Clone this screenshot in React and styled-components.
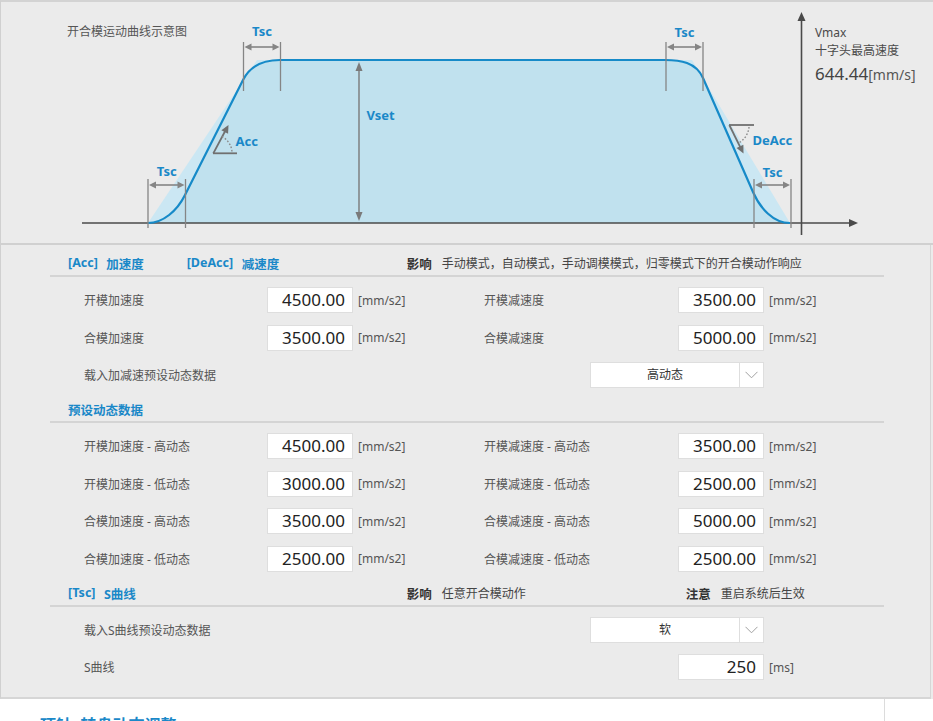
import React from "react";
import styled, { createGlobalStyle } from "styled-components";

const FONT = `"Noto Sans", "Noto Sans CJK SC", sans-serif`;
const BLUE = "#1a88c8";

const GlobalStyle = createGlobalStyle`
  html, body {
    margin: 0;
    padding: 0;
    overflow: hidden;
    background: #fff;
  }
  body {
    font-family: ${FONT};
  }
`;

const Page = styled.div`
  width: 933px;
  height: 721px;
  overflow: hidden;
  background: #ebebeb;
  display: flex;
  flex-direction: column;
`;

// ---------- chart ----------

const ChartPanel = styled.div`
  position: relative;
  flex-shrink: 0;
  height: 241px;
  border-top: 2px solid #d3d3d3;
  border-left: 1px solid #d0d0d0;
  border-bottom: 2px solid #d0d0d0;
  svg {
    display: block;
  }
`;

const ChartTitle = styled.div`
  position: absolute;
  left: 66px;
  top: 22px;
  font-size: 12px;
  line-height: 16px;
  color: #555;
`;

const VmaxBlock = styled.div`
  position: absolute;
  left: 814px;
  top: 22px;
  color: #4a4a4a;
  font-size: 12px;
  line-height: 18px;
  .num {
    line-height: 27px;
    font-size: 17px;
    color: #444;
  }
  .unit {
    font-size: 14px;
    color: #555;
  }
`;

const ChartLabel = styled.text`
  font-family: ${FONT};
  font-weight: 700;
  font-size: 13px;
  fill: ${BLUE};
`;

function head(tx, ty, dx, dy, len = 7, half = 3.5) {
  const n = Math.hypot(dx, dy);
  const ux = dx / n;
  const uy = dy / n;
  const bx = tx - ux * len;
  const by = ty - uy * len;
  return `${tx},${ty} ${bx - uy * half},${by + ux * half} ${bx + uy * half},${by - ux * half}`;
}

const GREY = "#858585";

function TscMark({ x1, x2, top, bottom, y, labelY }) {
  return (
    <g>
      <line x1={x1} x2={x1} y1={top} y2={bottom} stroke={GREY} strokeWidth="1.3" />
      <line x1={x2} x2={x2} y1={top} y2={bottom} stroke={GREY} strokeWidth="1.3" />
      <line x1={x1 + 5} x2={x2 - 5} y1={y} y2={y} stroke={GREY} strokeWidth="1.6" />
      <polygon points={head(x1 + 1, y, -1, 0)} fill={GREY} />
      <polygon points={head(x2 - 1, y, 1, 0)} fill={GREY} />
      <ChartLabel x={(x1 + x2) / 2} y={labelY} textAnchor="middle" dominantBaseline="central">
        Tsc
      </ChartLabel>
    </g>
  );
}

const CURVE =
  "M148,223 C163,223 177,211 185,195 L243,80 C251,64 265,60 280,60 L665,60 C680,60 696,62 703,78 L753,192 C760,208 773,223 790,223";

function MotionChart() {
  return (
    <svg width="932" height="241" viewBox="1 2 932 241">
      <polygon points="148,223 257,60 692,60 790,223" fill="#cbe7f3" />
      <path d={CURVE + " Z"} fill="#c0e1ee" />

      {/* axes */}
      <line x1="82" x2="851" y1="223" y2="223" stroke="#4a4a4a" strokeWidth="1.6" />
      <polygon points={head(858, 223, 1, 0, 9, 4)} fill="#4a4a4a" />
      <line x1="801.5" x2="801.5" y1="235" y2="20" stroke="#4a4a4a" strokeWidth="1.6" />
      <polygon points={head(801.5, 12, 0, -1, 9, 4)} fill="#4a4a4a" />

      <path d={CURVE} fill="none" stroke="#168ac8" strokeWidth="2.2" />

      <TscMark x1={148} x2={185.5} top={179} bottom={228} y={185} labelY={171} />
      <TscMark x1={243.5} x2={280.5} top={42} bottom={91} y={47} labelY={31} />
      <TscMark x1={666} x2={703} top={42} bottom={91} y={47} labelY={32} />
      <TscMark x1={754} x2={791} top={179} bottom={228} y={185} labelY={172} />

      {/* Vset */}
      <line x1="359" x2="359" y1="68" y2="215" stroke="#7a7a7a" strokeWidth="1.4" />
      <polygon points={head(359, 62, 0, -1, 9, 3.5)} fill="#7a7a7a" />
      <polygon points={head(359, 221, 0, 1, 9, 3.5)} fill="#7a7a7a" />
      <ChartLabel x="366.5" y="114.5" dominantBaseline="central">Vset</ChartLabel>

      {/* Acc */}
      <line x1="213" x2="237" y1="153.3" y2="153.3" stroke="#707070" strokeWidth="1.8" />
      <line x1="213.3" y1="153.3" x2="226" y2="129.5" stroke="#707070" strokeWidth="1.8" />
      <polygon points={head(228.5, 125, 15, -28, 8, 3.8)} fill="#707070" />
      <path d="M222,136.5 A19,19 0 0 1 232,152" fill="none" stroke="#8a8a8a" strokeWidth="1.4" strokeDasharray="1.6 1.8" />
      <ChartLabel x="235.5" y="140.5" dominantBaseline="central">Acc</ChartLabel>

      {/* DeAcc */}
      <line x1="729" x2="754" y1="125" y2="125" stroke="#707070" strokeWidth="1.8" />
      <line x1="729.3" y1="125" x2="741" y2="148.6" stroke="#707070" strokeWidth="1.8" />
      <polygon points={head(743.5, 153.5, 14, 28.3, 8, 3.8)} fill="#707070" />
      <path d="M749,127 A20,20 0 0 1 738.5,143" fill="none" stroke="#8a8a8a" strokeWidth="1.4" strokeDasharray="1.6 1.8" />
      <ChartLabel x="752.5" y="140" dominantBaseline="central">DeAcc</ChartLabel>
    </svg>
  );
}

// ---------- settings ----------

const SettingsPanel = styled.div`
  flex-shrink: 0;
  box-sizing: border-box;
  width: 931px;
  padding: 7px 0 7px 49px;
  border-left: 1px solid #d0d0d0;
  border-right: 1px solid #d6d6d6;
  border-bottom: 2px solid #d6d6d6;
`;

const Section = styled.section`
  width: 834px;
`;

const SectionHeader = styled.div`
  display: flex;
  align-items: center;
  height: 23px;
  padding-left: 18px;
  border-bottom: 2px solid #d4d4d4;
  font-size: 12.5px;
  white-space: nowrap;
`;

const HeaderTitle = styled.div`
  display: flex;
  width: 338.7px;
  flex-shrink: 0;
`;

const TitleGroup = styled.div`
  display: flex;
  gap: 8.5px;
  width: ${(p) => (p.$width ? `${p.$width}px` : "auto")};
  color: ${BLUE};
  font-weight: 700;
`;

const Info = styled.div`
  display: flex;
  gap: 10px;
  width: ${(p) => (p.$width ? `${p.$width}px` : "auto")};
  color: #444;
  font-size: 12px;
  b {
    color: #333;
    font-weight: 700;
    font-size: 12.5px;
  }
`;

const Rows = styled.div`
  display: flex;
  flex-direction: column;
  gap: 11.5px;
  padding: 10px 0 10px 34px;
`;

const Row = styled.div`
  display: grid;
  grid-template-columns: 183px 86px 131px 194px 86px 1fr;
  align-items: center;
  height: 26px;
`;

const Label = styled.div`
  grid-column: ${(p) => p.$col || "auto"};
  font-size: 12px;
  color: #555;
  white-space: nowrap;
`;

const ValueBox = styled.div`
  grid-column: ${(p) => p.$col || "auto"};
  box-sizing: border-box;
  height: 26px;
  padding-right: 7px;
  background: #fff;
  border: 1px solid #dedede;
  text-align: right;
  font-size: 17px;
  line-height: 24px;
  color: #222;
`;

const Unit = styled.div`
  margin-left: 5px;
  font-size: 12px;
  color: #555;
  white-space: nowrap;
`;

const Select = styled.div`
  grid-column: 4 / 6;
  justify-self: end;
  box-sizing: border-box;
  display: flex;
  width: 174px;
  height: 26px;
  background: #fff;
  border: 1px solid #dedede;
`;

const SelectText = styled.div`
  flex: 1;
  text-align: center;
  font-size: 12px;
  line-height: 24px;
  color: #333;
`;

const SelectButton = styled.div`
  width: 23px;
  border-left: 1px solid #dedede;
  display: flex;
  align-items: center;
  justify-content: center;
`;

const Chevron = () => (
  <svg width="13" height="8" viewBox="0 0 13 8">
    <polyline points="0.5,0.8 6.5,6.8 12.5,0.8" fill="none" stroke="#a0a0a0" strokeWidth="1" />
  </svg>
);

function Field({ label, value, unit, col }) {
  const start = col === 2 ? 4 : 1;
  return (
    <>
      <Label $col={start}>{label}</Label>
      <ValueBox $col={start + 1}>{value}</ValueBox>
      <Unit>{unit}</Unit>
    </>
  );
}

function DropRow({ label, value }) {
  return (
    <Row>
      <Label $col="1 / 4">{label}</Label>
      <Select>
        <SelectText>{value}</SelectText>
        <SelectButton>
          <Chevron />
        </SelectButton>
      </Select>
    </Row>
  );
}

const accRows = [
  ["开模加速度", "4500.00", "开模减速度", "3500.00"],
  ["合模加速度", "3500.00", "合模减速度", "5000.00"],
];

const presetRows = [
  ["开模加速度 - 高动态", "4500.00", "开模减速度 - 高动态", "3500.00"],
  ["开模加速度 - 低动态", "3000.00", "开模减速度 - 低动态", "2500.00"],
  ["合模加速度 - 高动态", "3500.00", "合模减速度 - 高动态", "5000.00"],
  ["合模加速度 - 低动态", "2500.00", "合模减速度 - 低动态", "2500.00"],
];

function PairRows({ rows }) {
  return rows.map(([l1, v1, l2, v2]) => (
    <Row key={l1}>
      <Field label={l1} value={v1} unit="[mm/s2]" col={1} />
      <Field label={l2} value={v2} unit="[mm/s2]" col={2} />
    </Row>
  ));
}

// ---------- bottom ----------

const BottomPanel = styled.div`
  flex: 1;
  display: flex;
  background: #fff;
`;

const BottomMain = styled.div`
  box-sizing: border-box;
  width: 885px;
  padding: 13px 0 0 40px;
  border-right: 1px solid #dcdcdc;
`;

export default function App() {
  return (
    <>
      <GlobalStyle />
      <Page>
        <ChartPanel>
          <MotionChart />
          <ChartTitle>开合模运动曲线示意图</ChartTitle>
          <VmaxBlock>
            <div>Vmax</div>
            <div>十字头最高速度</div>
            <div className="num">
              644.44<span className="unit">[mm/s]</span>
            </div>
          </VmaxBlock>
        </ChartPanel>

        <SettingsPanel>
          <Section>
            <SectionHeader>
              <HeaderTitle>
                <TitleGroup $width={118.7}>
                  <span>[Acc]</span>
                  <span>加速度</span>
                </TitleGroup>
                <TitleGroup>
                  <span>[DeAcc]</span>
                  <span>减速度</span>
                </TitleGroup>
              </HeaderTitle>
              <Info>
                <b>影响</b>
                <span>手动模式，自动模式，手动调模模式，归零模式下的开合模动作响应</span>
              </Info>
            </SectionHeader>
            <Rows>
              <PairRows rows={accRows} />
              <DropRow label="载入加减速预设动态数据" value="高动态" />
            </Rows>
          </Section>

          <Section>
            <SectionHeader>
              <HeaderTitle>
                <TitleGroup>
                  <span>预设动态数据</span>
                </TitleGroup>
              </HeaderTitle>
            </SectionHeader>
            <Rows>
              <PairRows rows={presetRows} />
            </Rows>
          </Section>

          <Section>
            <SectionHeader>
              <HeaderTitle>
                <TitleGroup>
                  <span>[Tsc]</span>
                  <span>S曲线</span>
                </TitleGroup>
              </HeaderTitle>
              <Info $width={279}>
                <b>影响</b>
                <span>任意开合模动作</span>
              </Info>
              <Info>
                <b>注意</b>
                <span>重启系统后生效</span>
              </Info>
            </SectionHeader>
            <Rows>
              <DropRow label="载入S曲线预设动态数据" value="软" />
              <Row>
                <Label $col={1}>S曲线</Label>
                <ValueBox $col={5}>250</ValueBox>
                <Unit>[ms]</Unit>
              </Row>
            </Rows>
          </Section>
        </SettingsPanel>

        <BottomPanel>
          <BottomMain>
            <TitleGroup>
              <span>顶针</span>
              <span>转盘动态调整</span>
            </TitleGroup>
          </BottomMain>
        </BottomPanel>
      </Page>
    </>
  );
}
